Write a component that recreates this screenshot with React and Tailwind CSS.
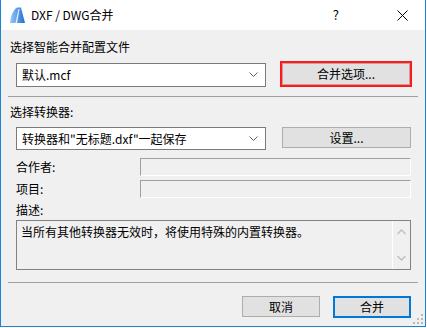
import React from "react";

const Chevron = () => (
  <svg width="9" height="6" viewBox="0 0 9 6" className="block">
    <path d="M0.5 0.5 L4.5 4.5 L8.5 0.5" fill="none" stroke="#606060" strokeWidth="1" />
  </svg>
);

function Combo({ text, h }) {
  return (
    <div className={`w-[250px] ${h} bg-white border border-[#7a7a7a] flex items-center pl-[5px] pr-[7px]`}>
      <span className="flex-1 leading-[16px] whitespace-nowrap">{text}</span>
      <Chevron />
    </div>
  );
}

export default function App() {
  return (
    <div
      className="w-[427px] h-[328px] bg-white text-[12px] text-black"
      style={{ fontFamily: '"Noto Sans CJK SC", "Noto Sans", sans-serif' }}
    >
      <div className="relative w-[426px] h-[327px] border-l border-r border-b border-[#1883d7] flex flex-col">
        {/* Title bar */}
        <div className="h-[30px] bg-white flex items-center shrink-0">
          <svg width="17" height="16" viewBox="0 0 17 16" className="ml-[8px]">
            <defs>
              <linearGradient id="g" x1="0" y1="0" x2="1" y2="0">
                <stop offset="0" stopColor="#9cc8f5" />
                <stop offset="1" stopColor="#1e6fd6" />
              </linearGradient>
            </defs>
            <path d="M1 16 C1.5 9 4 3 8 0.5 L12 0.5 L16 16 Z" fill="url(#g)" />
            <path d="M6.5 16 L9.5 2 L10.5 2 L8 16 Z" fill="#e8f2fd" />
          </svg>
          <span className="ml-[5px] text-[12px] leading-[16px]">DXF / DWG合并</span>
          <span className="ml-auto mr-[58px] text-[13px] leading-[16px]">?</span>
          <svg width="11" height="11" viewBox="0 0 11 11" className="mr-[17px]">
            <path d="M0.5 0.5 L10.5 10.5 M10.5 0.5 L0.5 10.5" stroke="#000" strokeWidth="1" />
          </svg>
        </div>

        {/* Body */}
        <div className="flex-1 bg-[#f0f0f0] flex flex-col">
          <div className="mt-[9px] ml-[9px] leading-[16px]">选择智能合并配置文件</div>

          <div className="mt-[6px] flex items-start">
            <div className="ml-[15px] mt-[2px]">
              <Combo text="默认.mcf" h="h-[24px]" />
            </div>
            <div className="ml-[14px] w-[132px] h-[26px] border-2 border-[#ff1a1a] bg-[#e1e1e1] flex items-center justify-center">
              <div className="w-full h-full border border-[#c8a0a0] flex items-center justify-center leading-[16px]">
                合并选项...
              </div>
            </div>
          </div>

          <div className="mt-[9px] ml-[7px] w-[410px] h-px bg-[#a0a0a0]" />

          <div className="mt-[7px] ml-[9px] leading-[16px]">选择转换器:</div>

          <div className="mt-[7px] flex items-start">
            <div className="ml-[15px]">
              <Combo text={'转换器和"无标题.dxf"一起保存'} h="h-[23px]" />
            </div>
            <div className="ml-[16px] w-[129px] h-[21px] border border-[#adadad] bg-[#e1e1e1] flex items-center justify-center leading-[16px]">
              设置...
            </div>
          </div>

          <div className="mt-[8px] flex items-center">
            <div className="ml-[15px] w-[124px] leading-[16px]">合作者:</div>
            <div className="w-[271px] h-[18px] border-t border-l border-[#a0a0a0] border-b border-r border-b-white border-r-white" />
          </div>

          <div className="mt-[4px] flex items-center">
            <div className="ml-[15px] w-[124px] leading-[16px]">项目:</div>
            <div className="w-[271px] h-[18px] border-t border-l border-[#a0a0a0] border-b border-r border-b-white border-r-white" />
          </div>

          <div className="mt-[4px] ml-[15px] leading-[16px]">描述:</div>

          <div className="mt-[2px] ml-[15px] w-[395px] h-[50px] border border-[#828282] flex">
            <div className="flex-1 pl-[4px] pt-[3px] leading-[16px] whitespace-nowrap">
              当所有其他转换器无效时，将使用特殊的内置转换器。
            </div>
            <div className="w-[18px] border-l border-white flex flex-col items-center justify-between py-[8px]">
              <svg width="9" height="6" viewBox="0 0 9 6">
                <path d="M0.5 5 L4.5 1 L8.5 5" fill="none" stroke="#c0c0c0" strokeWidth="1.5" />
              </svg>
              <svg width="9" height="6" viewBox="0 0 9 6">
                <path d="M0.5 1 L4.5 5 L8.5 1" fill="none" stroke="#c0c0c0" strokeWidth="1.5" />
              </svg>
            </div>
          </div>

          <div className="mt-[12px] ml-[7px] w-[410px] h-px bg-[#a0a0a0]" />

          <div className="mt-[13px] flex justify-end pr-[14px] gap-[13px] items-start">
            <div className="w-[78px] h-[21px] border border-[#adadad] bg-[#e1e1e1] flex items-center justify-center leading-[16px]">
              取消
            </div>
            <div className="w-[78px] h-[22px] border-2 border-[#0078d7] bg-[#e1e1e1] flex items-center justify-center leading-[16px]">
              合并
            </div>
          </div>
        </div>

        {/* resize grip */}
        <svg width="10" height="10" viewBox="0 0 10 10" className="absolute right-[2px] bottom-[2px]">
          <rect x="8" y="0" width="2" height="2" fill="#b8b8b8" />
          <rect x="4" y="4" width="2" height="2" fill="#b8b8b8" />
          <rect x="8" y="4" width="2" height="2" fill="#b8b8b8" />
          <rect x="0" y="8" width="2" height="2" fill="#b8b8b8" />
          <rect x="4" y="8" width="2" height="2" fill="#b8b8b8" />
          <rect x="8" y="8" width="2" height="2" fill="#b8b8b8" />
        </svg>
      </div>
    </div>
  );
}
